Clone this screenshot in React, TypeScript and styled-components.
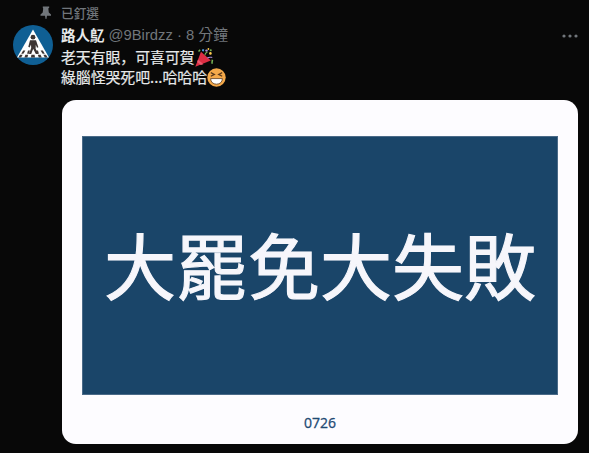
import styled, { createGlobalStyle } from "styled-components"

const CJK = `"Noto Sans CJK TC", "Noto Sans", sans-serif`
const CJK_JP = `"Noto Sans CJK JP", "Noto Sans", sans-serif`

const GlobalStyle = createGlobalStyle`
    html, body {
        margin: 0;
        padding: 0;
        background: #080808;
        overflow: hidden;
    }
`

const Page = styled.div`
    width: 589px;
    height: 453px;
    box-sizing: border-box;
    padding: 4px 11px 0 13px;
    background: #080808;
    font-family: ${CJK};
    overflow: hidden;
`

const PinnedRow = styled.div`
    display: flex;
    align-items: center;
    height: 17px;
    padding-left: 27px;
    gap: 9px;
    color: #71767b;
    font-size: 12.7px;
    font-weight: 500;
    line-height: 17px;
`

const Tweet = styled.div`
    display: flex;
    gap: 8px;
    margin-top: 4px;
`

const Avatar = styled.svg`
    flex: none;
    width: 40px;
    height: 40px;
`

const Content = styled.div`
    flex: 1;
    min-width: 0;
`

const Header = styled.div`
    display: flex;
    align-items: center;
    height: 20px;
    gap: 4px;
    font-size: 14.5px;
    line-height: 20px;
`

const Name = styled.span`
    color: #e7e9ea;
    font-weight: 700;
`

const Meta = styled.span`
    flex: 1;
    color: #71767b;
    font-family: "Liberation Sans", ${CJK};
    font-size: 14.8px;
`

const More = styled.svg`
    flex: none;
    width: 16px;
    height: 4px;
    margin-top: 1px;
`

const Body = styled.div`
    margin-top: 2px;
    color: #e7e9ea;
    font-family: ${CJK_JP};
    font-size: 14.85px;
    line-height: 20px;
    -webkit-text-stroke: 0.2px #e7e9ea;
`

const Line = styled.div`
    display: flex;
    align-items: center;
    height: 20px;
`

const Emoji = styled.svg`
    flex: none;
    width: 19px;
    height: 19px;
`

const Card = styled.div`
    box-sizing: border-box;
    width: 516px;
    height: 344px;
    margin: 13px 0 0 1px;
    padding: 36px 20px 0;
    background: #fdfcff;
    border-radius: 14px;
`

const Banner = styled.div`
    display: flex;
    align-items: center;
    justify-content: center;
    height: 259px;
    padding-bottom: 6px;
    background: #1a4569;
    border: 1px solid #4a6a88;
    box-sizing: border-box;
    color: #f6f6fb;
    font-size: 72px;
    font-weight: 400;
    line-height: 1;
    white-space: nowrap;
    -webkit-text-stroke: 1.1px #f6f6fb;
`

const Caption = styled.div`
    margin-top: 18px;
    text-align: center;
    color: #1f4a73;
    font-family: "Open Sans", sans-serif;
    font-size: 14px;
    font-weight: 500;
    line-height: 20px;
    -webkit-text-stroke: 0.3px #1f4a73;
`

const PinIcon = () => (
    <svg width="12" height="13" viewBox="0 0 12 13" style={{ flex: "none" }}>
        <path d="M2.8 0.5h6.4v1.2l-.9.7.5 4 2.2 2v1.4H7l-.6 3.2h-.8L5 9.8H.5V8.4l2.2-2 .5-4-.4-.7z" fill="#71767b" />
    </svg>
)

const CrossingAvatar = () => (
    <Avatar viewBox="0 0 40 40">
        <circle cx="20" cy="20" r="20" fill="#0f5f94" />
        <path d="M20 4.5 36 32.5H4z" fill="#fff" />
        <circle cx="20" cy="12.2" r="2.4" fill="#3d3533" />
        <path d="M17 15.2h6l2.4 7-1.4.6-1.2-3-.2 3.6 2.4 5.6h-2.2l-2.6-5.2-2 5.2h-2.2l2.2-6-.2-3.6-1.4 3-1.3-.6z" fill="#3d3533" />
        <g fill="#3d3533">
            <path d="M10.2 25.5h2.2l-2 3.2H8.2z" />
            <path d="M27.6 25.5h2.2l2 3.2h-2.2z" />
            <path d="M7 29.8h2.6l-1.4 2.6H5.4z" />
            <path d="M12.4 29.8h2.8l-.8 2.6h-3z" />
            <path d="M18.4 29.8h3.2l.4 2.6h-4z" />
            <path d="M24.8 29.8h2.8l1.2 2.6h-3z" />
            <path d="M30.4 29.8H33l1.6 2.6h-2.8z" />
            <path d="M15 25.5h1.8l-.5 3.2h-2.2z" />
            <path d="M23.2 25.5H25l.9 3.2h-2.2z" />
        </g>
    </Avatar>
)

const PartyPopper = () => (
    <Emoji viewBox="0 0 19 19">
        <path d="M0.3 18.7 6 3.8 15.8 12.6z" fill="#dd2e44" />
        <path d="M3 11.6 8.4 16.2 5.8 17 2.2 14z" fill="#ea596e" />
        <path d="M3 3l1.6-1.8 1 1-1.5 1.8z" fill="#77b255" />
        <path d="M7.5 1l1.7.5-.5 2-1.7-.5z" fill="#55acee" />
        <circle cx="11.5" cy="2.6" r="1.2" fill="#aa8dd8" />
        <path d="M9.4 7c.6-2 1.6-3 3-3.4l.3 1c-1.3.4-1.9 1.4-2.3 2.8z" fill="#77b255" />
        <circle cx="15.4" cy="5.4" r="1.3" fill="#ffcc4d" />
        <path d="M12 9.6c1.5-1 3.2-1.2 5.4-.6l-.3 1c-1.9-.5-3.2-.3-4.4.4z" fill="#aa8dd8" />
        <path d="M15.6 1l1.4 1-1 1.4-1.4-1z" fill="#77b255" />
        <path d="M16.6 11.5l1.6.6-.6 4-1.4-.5z" fill="#77b255" />
        <circle cx="13.4" cy="1" r=".9" fill="#ffcc4d" />
    </Emoji>
)

const GrinSquint = () => (
    <Emoji viewBox="0 0 19 19">
        <circle cx="9.5" cy="9.5" r="9.2" fill="#f4a94a" />
        <path d="M3.8 4.6 7.4 6.4 3.8 8.2M15.2 4.6 11.6 6.4 15.2 8.2" fill="none" stroke="#5a3a1c" strokeWidth="1.2" />
        <path d="M3.6 10.6h11.8c0 3.4-2.5 5.6-5.9 5.6s-5.9-2.2-5.9-5.6z" fill="#fff" stroke="#5a3a1c" strokeWidth=".8" />
    </Emoji>
)

export default function App() {
    return (
        <Page>
            <GlobalStyle />
            <PinnedRow>
                <PinIcon />
                <span>已釘選</span>
            </PinnedRow>
            <Tweet>
                <CrossingAvatar />
                <Content>
                    <Header>
                        <Name>路人鳦</Name>
                        <Meta>@9Birdzz · 8 分鐘</Meta>
                        <More viewBox="0 0 16 4">
                            <circle cx="2" cy="2" r="1.6" fill="#71767b" />
                            <circle cx="8" cy="2" r="1.6" fill="#71767b" />
                            <circle cx="14" cy="2" r="1.6" fill="#71767b" />
                        </More>
                    </Header>
                    <Body>
                        <Line>老天有眼，可喜可賀<PartyPopper /></Line>
                        <Line>綠腦怪哭死吧...哈哈哈<GrinSquint /></Line>
                    </Body>
                    <Card>
                        <Banner>大罷免大失敗</Banner>
                        <Caption>0726</Caption>
                    </Card>
                </Content>
            </Tweet>
        </Page>
    )
}
